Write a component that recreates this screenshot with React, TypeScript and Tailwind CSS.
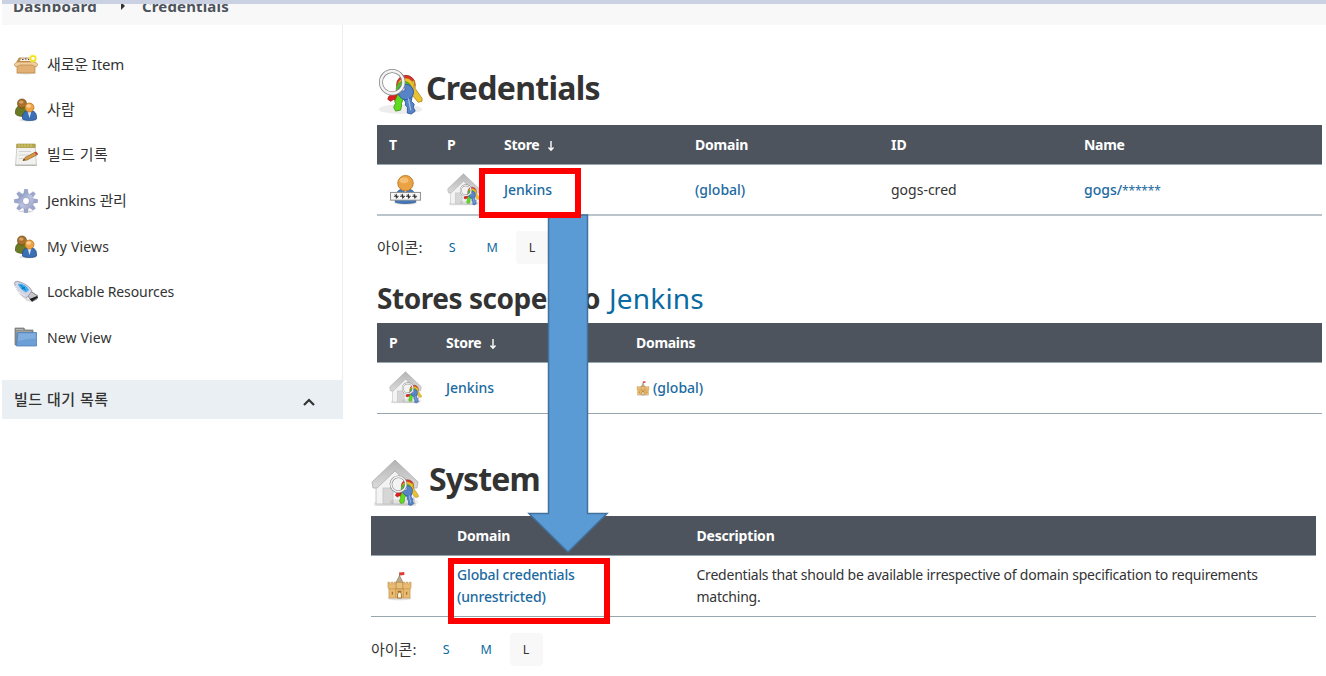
import React from "react";

type IconProps = { className?: string };

function Keys() {
  return (
    <g>
      <ellipse cx="23" cy="41" rx="22" ry="5" fill="#000" opacity=".07" />
      <path d="M20 21l-9 7-1 3 3 2 3-2 1 1 5-4z" fill="#e02020" stroke="#a01414" strokeWidth=".8" />
      <circle cx="28.500" cy="16" r="9.500" fill="#d9352b" stroke="#9c2019" strokeWidth=".8" />
      <path d="M31 13l6-1 1 8 7 10 0 3-4 1-9-11z" fill="#ecc235" stroke="#a98312" strokeWidth=".8" />
      <circle cx="28" cy="18" r="8.500" fill="#f2c32c" stroke="#b8891a" strokeWidth=".5" />
      <path d="M21 24l-4 9 1 2-2 4 2 4 5-1 1-4 0-3 4-9z" fill="#5fdc1f" stroke="#3c8a10" strokeWidth=".8" />
      <circle cx="26.500" cy="20.500" r="8" fill="#54b92c" stroke="#3c8a10" strokeWidth=".5" />
      <path d="M25 28l3 6 0 3 2 2 0 6 4 1 4-3-2-4 1-3-3-3 1-6z" fill="#5784c7" stroke="#2c569c" strokeWidth=".9" />
      <circle cx="28.500" cy="23.500" r="7.800" fill="#5784c7" stroke="#2c569c" strokeWidth=".9" />
      <path d="M31 30l2.500 12" stroke="#a3c1ea" strokeWidth="1.200" />
      <circle cx="25.500" cy="20.500" r="2.200" fill="#edf2f8" stroke="#2c569c" strokeWidth=".8" />
      <circle cx="14.500" cy="13.500" r="11.500" fill="none" stroke="#858585" strokeWidth="4" />
      <circle cx="14.500" cy="13.500" r="11.500" fill="none" stroke="#f3f3f3" strokeWidth="2.400" />
    </g>
  );
}

function KeysIcon({ className }: IconProps) {
  return (
    <svg viewBox="0 0 48 48" className={className}>
      <Keys />
    </svg>
  );
}

function HouseIcon({ className }: IconProps) {
  return (
    <svg viewBox="0 0 48 48" className={className}>
      <defs>
        <linearGradient id="roof" x1="0" y1="0" x2="0" y2="1">
          <stop offset="0" stopColor="#b4b4b4" />
          <stop offset="1" stopColor="#dadada" />
        </linearGradient>
      </defs>
      <rect x="3" y="43" width="42" height="4" rx="2" fill="#000" opacity=".12" />
      <path d="M5 24L24 6l19 18v21H5z" fill="#f3f3f3" stroke="#c8c8c8" />
      <rect x="12" y="29" width="10" height="16" fill="#d6d6d6" stroke="#bfbfbf" strokeWidth=".7" />
      <path d="M24 1L1 23l1 6 4 0L24 12l18 17 4 0 1-6z" fill="url(#roof)" stroke="#adadad" strokeWidth=".8" />
      <g transform="translate(18 16.500) scale(.65)">
        <Keys />
      </g>
    </svg>
  );
}

function CastleIcon({ className }: IconProps) {
  return (
    <svg viewBox="0 0 26 30" className={className}>
      <ellipse cx="13" cy="28" rx="12.500" ry="1.800" fill="#000" opacity=".12" />
      <path d="M13 1v6" stroke="#777" strokeWidth=".9" />
      <path d="M13 1l5-.5v3l-5 .5z" fill="#df3a32" />
      <path d="M13 4l4 8H9z" fill="#b9aa8c" stroke="#8b795a" strokeWidth=".6" />
      <rect x="9.500" y="11" width="7" height="8" fill="#e9c078" stroke="#b27b32" strokeWidth=".6" />
      <path d="M1 11h1.800v1.800h1.500V11h1.800v1.800h1.300V11H9v7h8v-7h1.600v1.800h1.300V11h1.800v1.800h1.500V11H25v6l-1 1v9.500H2V18l-1-1z" fill="#e9bb72" stroke="#c08b43" strokeWidth=".6" />
      <path d="M2 18h22M9 18v9M17 18v9" stroke="#c08b43" strokeWidth=".7" />
      <path d="M11 27.500v-4a2 2 0 014 0v4z" fill="#fff3d8" stroke="#8c5a1e" strokeWidth=".8" />
      <path d="M5.500 21v3M20.500 21v3M11 20.500h4" stroke="#8c5a1e" strokeWidth="1" />
    </svg>
  );
}

function UserPasswordIcon({ className }: IconProps) {
  return (
    <svg viewBox="0 0 32 32" className={className}>
      <ellipse cx="16" cy="30" rx="12" ry="1.800" fill="#000" opacity=".12" />
      <path d="M5.500 29c-1.500-9 3-14 10.500-14s12 5 10.500 14c-3 1.800-18 1.800-21 0z" fill="#4479bd" stroke="#274f8c" strokeWidth=".8" />
      <path d="M13 15l3 4 3-4z" fill="#eef2f7" />
      <circle cx="16" cy="9.500" r="8" fill="#eba244" stroke="#b77520" strokeWidth=".9" />
      <ellipse cx="14.500" cy="6.500" rx="4.500" ry="3" fill="#f8c680" opacity=".8" />
      <rect x=".6" y="19" width="30.800" height="8" fill="#f8f8f8" stroke="#8b8b8b" />
      <path d="M4 23h5M6.500 20.500v5M10.500 23h5M13 20.500v5M16.500 23h5M19 20.500v5M23 23h5M25.500 20.500v5M5 21.200l3 3.600M11.500 21.200l3 3.600M17.500 21.200l3 3.600M24 21.200l3 3.600" stroke="#222" strokeWidth=".9" />
    </svg>
  );
}

function BoxIcon({ className }: IconProps) {
  return (
    <svg viewBox="0 0 24 24" className={className}>
      <ellipse cx="12" cy="20" rx="10" ry="1.500" fill="#000" opacity=".14" />
      <path d="M5 5h14l2 4H3z" fill="#c99a5c" stroke="#a06f30" strokeWidth=".7" />
      <path d="M7 5.500h9l1 2.500H6z" fill="#f3efe8" />
      <path d="M8 6.500h1.500M11 6h1.500M14 6.500h1.500" stroke="#4c443b" strokeWidth="1" />
      <path d="M3 8.500h18V20H3z" fill="#e2b074" stroke="#bd8746" strokeWidth=".7" />
      <path d="M3 9L0 11.500 2 14l4-2h12l4 2 2-2.500L21 9z" fill="#f0cd9c" stroke="#bd8a4c" strokeWidth=".7" />
      <circle cx="19" cy="5.500" r="4" fill="#fff36b" opacity=".7" />
      <circle cx="19" cy="5.500" r="2.500" fill="#fff" stroke="#f5e11b" strokeWidth="1.500" />
    </svg>
  );
}

function PeopleIcon({ className }: IconProps) {
  return (
    <svg viewBox="0 0 24 24" className={className}>
      <ellipse cx="14" cy="22" rx="9" ry="1.500" fill="#000" opacity=".12" />
      <path d="M1.500 16c-.5-6 2-8.500 6.500-8.500S15 11 14.500 17c-2 2-11 2-13-1z" fill="#6b7a24" stroke="#46540f" strokeWidth=".7" />
      <circle cx="8" cy="5.500" r="4.500" fill="#a8712c" stroke="#704510" strokeWidth=".7" />
      <ellipse cx="7.300" cy="4.100" rx="2.300" ry="1.600" fill="#d3a266" />
      <path d="M8.500 21c-.5-6 2-8.500 7-8.500s7.500 2.500 7 8.500c-3 2-11 2-14 0z" fill="#3b6fb4" stroke="#204884" strokeWidth=".7" />
      <path d="M13.500 13l2 7 2-7z" fill="#dbe7f6" />
      <circle cx="15.500" cy="9.500" r="4.500" fill="#eea244" stroke="#b3701b" strokeWidth=".7" />
      <ellipse cx="14.700" cy="8" rx="2.500" ry="1.700" fill="#fbd096" />
    </svg>
  );
}

function NotepadIcon({ className }: IconProps) {
  return (
    <svg viewBox="0 0 24 24" className={className}>
      <path d="M3 2h18l1.500 20.500h-21z" fill="#f1f1ef" stroke="#c4c4c0" strokeWidth=".8" />
      <path d="M1.500 21.500h21v1.500h-21z" fill="#b8b8b4" />
      <path d="M2.800 1h18.400v3.500H2.500z" fill="#b9aa4a" stroke="#988b35" strokeWidth=".6" />
      <path d="M5 1v3M8 1v3M11 1v3M14 1v3M17 1v3" stroke="#e5db8d" strokeWidth=".6" />
      <path d="M5 8.500h12M5 12h10M5 15.500h5" stroke="#cfcfcf" strokeWidth=".9" />
      <path d="M9 17.500l2-3L21.500 9l2 2.500L13 17z" fill="#d89b45" stroke="#8d5c1d" strokeWidth=".7" />
      <path d="M20.500 9.500l1.500-1 2 2.500-1.500 1z" fill="#cf3a32" />
      <path d="M9 17.500l1-1.500 1 1z" fill="#222" />
    </svg>
  );
}

const GEAR_TEETH = [0, 45, 90, 135, 180, 225, 270, 315];

function GearIcon({ className }: IconProps) {
  return (
    <svg viewBox="0 0 24 24" className={className}>
      <defs>
        <linearGradient id="gear" x1="0" y1="0" x2="1" y2="1">
          <stop offset="0" stopColor="#7d90bb" />
          <stop offset=".5" stopColor="#bcc2de" />
          <stop offset="1" stopColor="#9aa0c4" />
        </linearGradient>
      </defs>
      <ellipse cx="12" cy="22.500" rx="7" ry="1" fill="#000" opacity=".15" />
      <g fill="#9aa6cb" stroke="#7984ad" strokeWidth=".4">
        {GEAR_TEETH.map((angle) => (
          <path key={angle} d="M9.800 5l.7-4.700h3l.7 4.700z" transform={`rotate(${angle} 12 12)`} />
        ))}
      </g>
      <circle cx="12" cy="12" r="8" fill="url(#gear)" />
      <circle cx="12" cy="12" r="4.300" fill="#a9afd0" />
      <circle cx="12" cy="12" r="2.900" fill="#fff" />
    </svg>
  );
}

function UsbIcon({ className }: IconProps) {
  return (
    <svg viewBox="0 0 24 24" className={className}>
      <path d="M4 13l9 8 5 1-6-5z" fill="#000" opacity=".14" />
      <path d="M13 15l4-3.500 7 4.500-1 3-5 2.500z" fill="#c5c5c9" stroke="#55555a" strokeWidth=".7" />
      <path d="M15.500 19l7.500-3 .8 1.500-5.800 4z" fill="#1d1d1f" />
      <path d="M.5 3C1 1 3 1 6 2c5 1.500 10 5 12 9l-5 6.500C8 16 2 11 .5 3z" fill="#d4d4e2" stroke="#8f8fa8" strokeWidth=".8" />
      <path d="M4 4c4-1 9 2 11 6l-3 2.500C9 11 5 8 4 4z" fill="#38aef0" />
      <path d="M6.500 5l5 5M8 8.500l3-1" stroke="#075f9f" strokeWidth=".9" />
      <path d="M1.500 6c1 4 5 8 10 10.500" stroke="#f7f7ff" fill="none" />
    </svg>
  );
}

function FolderIcon({ className }: IconProps) {
  return (
    <svg viewBox="0 0 24 24" className={className}>
      <path d="M1 3h9l1 2h8v15H1z" fill="#8d8f8c" stroke="#6f716e" strokeWidth=".7" />
      <path d="M2 4.500h7M2.500 7h15" stroke="#b9bbb8" strokeWidth=".9" />
      <path d="M3.500 7.500h19V21h-20z" fill="#6c9fd6" stroke="#4d80b8" strokeWidth=".8" />
      <path d="M4.500 8.500h17v5C14 13 10 15 4 16z" fill="#8fb9e4" opacity=".6" />
    </svg>
  );
}

const TASKS = [
  { icon: BoxIcon, label: "새로운 Item", height: "h-[45px]", text: "text-[15px] tracking-[-0.15px]" },
  { icon: PeopleIcon, label: "사람", height: "h-[45px]", text: "text-[15px] tracking-[0.3px]" },
  { icon: NotepadIcon, label: "빌드 기록", height: "h-[46px]", text: "text-[15px] tracking-[0.4px] -mt-[2px]" },
  { icon: GearIcon, label: "Jenkins 관리", height: "h-[46px]", text: "text-[15px] tracking-[-0.2px] -mt-[2px]" },
  { icon: PeopleIcon, label: "My Views", height: "h-[45px]", text: "text-[14px] tracking-[0.15px]" },
  { icon: UsbIcon, label: "Lockable Resources", height: "h-[45px]", text: "text-[14px] tracking-[-0.1px]" },
  { icon: FolderIcon, label: "New View", height: "h-[46px]", text: "text-[14px] tracking-[0.15px]" },
];

function Sidebar() {
  return (
    <aside className="ml-[2px] w-[341px] shrink-0">
      <nav className="h-[355px] border-r border-[#e8eff2] pt-[17px] pl-[12px]">
        {TASKS.map(({ icon: Icon, label, height, text }) => (
          <a key={label} className={`flex items-center gap-[9px] text-[#333] ${height}`}>
            <Icon className="size-[24px] shrink-0" />
            <span className={`whitespace-nowrap ${text}`}>{label}</span>
          </a>
        ))}
      </nav>
      <div className="flex h-[39px] items-center justify-between bg-[#e9eff2] pr-[27px] pl-[12px] text-[15px] font-medium tracking-[0.5px] text-[#333]">
        <span>빌드 대기 목록</span>
        <svg viewBox="0 0 14 10" className="mt-[5px] h-[10px] w-[14px]">
          <path d="M2 8l5-5 5 5" fill="none" stroke="#333" strokeWidth="2.200" />
        </svg>
      </div>
    </aside>
  );
}

function IconSizes() {
  return (
    <div className="flex h-[33px] items-center">
      <span className="w-[58.600px] text-[15px] whitespace-nowrap text-[#333]">아이콘:</span>
      <a className="w-[33px] pt-[1px] text-center text-[12.500px] text-[#0b6aa2]">S</a>
      <a className="ml-[7px] w-[33px] pt-[1px] text-center text-[12.500px] text-[#0b6aa2]">M</a>
      <span className="ml-[7px] flex h-[33px] w-[33px] items-center justify-center rounded-[4px] bg-[#f8f8f8] pt-[1px] text-[12.500px] text-[#333]">L</span>
    </div>
  );
}

const HEAD = "grid h-[40px] items-center border-b border-[#98a6b0] bg-[#4d545d] text-[14px] font-bold text-white";
const LINK = "font-medium text-[#1b6a9f]";

function SortArrow() {
  return (
    <svg viewBox="0 0 8 12" className="ml-[8px] inline-block h-[12px] w-[8px]">
      <path d="M4 1v9M1.500 7.500L4 10.300l2.500-2.800" fill="none" stroke="#fff" strokeWidth="1.400" />
    </svg>
  );
}

function CredentialsTable() {
  const cols = "grid-cols-[58px_57px_191px_196px_193px_1fr]";
  return (
    <div className="w-[945px]">
      <div className={`${HEAD} ${cols} pl-[12px]`}>
        <span>T</span>
        <span>P</span>
        <span className="tracking-[-0.3px]">Store<SortArrow /></span>
        <span className="tracking-[-0.2px]">Domain</span>
        <span>ID</span>
        <span className="tracking-[-0.3px]">Name</span>
      </div>
      <div className={`grid h-[51px] items-center border-b-2 border-[#bcc4cb] pl-[12px] text-[14px] text-[#333] ${cols}`}>
        <UserPasswordIcon className="ml-[1px] size-[31px]" />
        <HouseIcon className="size-[33px]" />
        <a className={LINK}>Jenkins</a>
        <a className={LINK}>(global)</a>
        <span>gogs-cred</span>
        <a className={LINK}>gogs/<span className="text-[12px] font-normal tracking-[-0.200px]">******</span></a>
      </div>
    </div>
  );
}

function StoresTable() {
  const cols = "grid-cols-[57px_190px_1fr]";
  return (
    <div className="w-[945px]">
      <div className={`${HEAD} ${cols} pl-[12px]`}>
        <span>P</span>
        <span className="tracking-[-0.3px]">Store<SortArrow /></span>
        <span className="tracking-[-0.3px]">Domains</span>
      </div>
      <div className={`grid h-[51px] items-center border-b border-[#98a6b0] pb-[2px] pl-[12px] text-[14px] ${cols}`}>
        <HouseIcon className="mt-[1px] size-[33px]" />
        <a className={LINK}>Jenkins</a>
        <span className="flex items-center gap-[3px]">
          <CastleIcon className="mt-[2px] h-[15px] w-[14px]" />
          <a className={LINK}>(global)</a>
        </span>
      </div>
    </div>
  );
}

function DomainsTable() {
  const cols = "grid-cols-[73px_239.500px_1fr]";
  return (
    <div className="w-[945px]">
      <div className={`${HEAD} ${cols} pl-[13px]`}>
        <span />
        <span className="tracking-[-0.2px]">Domain</span>
        <span className="tracking-[-0.2px]">Description</span>
      </div>
      <div className={`grid h-[61px] items-center border-b border-[#98a6b0] pl-[13px] text-[14px] leading-[22px] text-[#333] ${cols}`}>
        <CastleIcon className="ml-[3px] h-[30px] w-[25px]" />
        <a className={`${LINK} tracking-[-0.15px]`}>Global credentials<br />(unrestricted)</a>
        <span className="tracking-[-0.225px] whitespace-nowrap">
          Credentials that should be available irrespective of domain specification to requirements
          <br />
          matching.
        </span>
      </div>
    </div>
  );
}

export default function App() {
  return (
    <div className="relative h-[676px] w-[1326px] overflow-hidden bg-white font-['Noto_Sans','Noto_Sans_CJK_KR',sans-serif]">
      <div className="ml-[2px] h-[4px] bg-[#c9d1e2]" />
      <header className="ml-[2px] flex h-[21px] items-start overflow-hidden bg-[#f8f8f8] pl-[11px] text-[15px] leading-[20px] font-bold text-[#4d545d]">
        <span className="-mt-[8px] w-[107px] tracking-[0.350px]">Dashboard</span>
        <svg viewBox="0 0 6 8" className="-mt-[2px] h-[8px] w-[6px]">
          <path d="M1 0l4 4-4 4z" fill="#333" />
        </svg>
        <span className="-mt-[8px] ml-[16px] tracking-[0.150px]">Credentials</span>
      </header>
      <div className="flex">
        <Sidebar />
        <main className="pl-[34px]">
          <div className="flex h-[100px] items-start pt-[43px]">
            <KeysIcon className="mt-[1px] ml-[1px] size-[47px]" />
            <h1 className="ml-[1px] text-[32px] leading-[40px] font-bold tracking-[-0.700px] text-[#333]">Credentials</h1>
          </div>
          <CredentialsTable />
          <div className="mt-[15px]"><IconSizes /></div>
          <h2 className="flex h-[59px] items-center gap-[9px] pt-[8px] text-[28px] whitespace-nowrap text-[#333]">
            <span className="font-bold tracking-[-0.450px]">Stores scoped to</span>
            <a className="tracking-[0.200px] text-[#0b6aa2]">Jenkins</a>
          </h2>
          <StoresTable />
          <section className="-ml-[6px]">
            <div className="flex h-[102px] items-start pt-[45px]">
              <HouseIcon className="size-[48px]" />
              <h1 className="ml-[10px] text-[32px] leading-[40px] font-bold tracking-[-0.900px] text-[#333]">System</h1>
            </div>
            <DomainsTable />
            <div className="mt-[16px]"><IconSizes /></div>
          </section>
        </main>
      </div>
      <svg viewBox="0 0 84 342" className="absolute top-[213px] left-[526px] h-[342px] w-[84px]">
        <path d="M22.500 2h39v298.500H81L42 339 3 300.500h19.500z" fill="#5b9bd5" stroke="#41719c" strokeWidth="1.500" />
      </svg>
      <div className="absolute top-[168px] left-[479px] h-[50px] w-[102px] border-[6px] border-[#fe0000]" />
      <div className="absolute top-[558px] left-[448px] h-[66px] w-[162px] border-[6px] border-[#fe0000]" />
    </div>
  );
}
